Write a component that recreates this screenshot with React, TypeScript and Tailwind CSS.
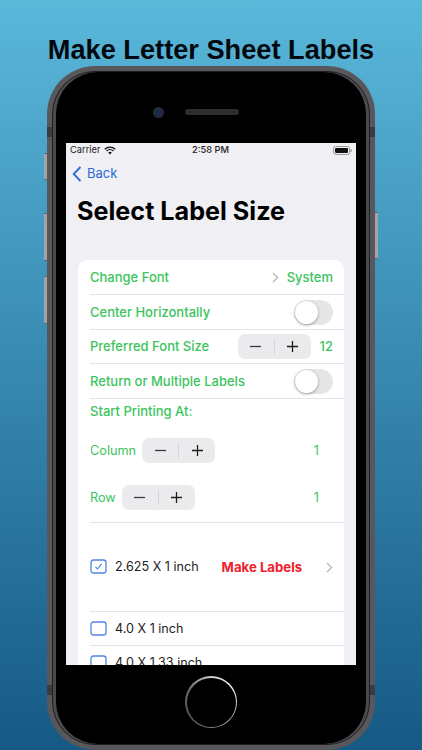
import React from 'react';

function Stepper() {
  return (
    <div className="flex h-[25px] w-[73px] items-center rounded-[7px] bg-[#ebebed]">
      <div className="flex flex-1 justify-center">
        <svg width="13" height="13" viewBox="0 0 13 13"><path d="M1 6.5h11" stroke="#3a3a3c" strokeWidth="1.3" /></svg>
      </div>
      <div className="h-[14px] w-px bg-[#d4d4d6]" />
      <div className="flex flex-1 justify-center">
        <svg width="13" height="13" viewBox="0 0 13 13"><path d="M1 6.5h11M6.5 1v11" stroke="#1c1c1e" strokeWidth="1.3" /></svg>
      </div>
    </div>
  );
}

function Toggle() {
  return (
    <div className="flex h-[25px] w-[39px] items-center rounded-full bg-[#e6e6e8] p-[1px]">
      <div className="h-[23px] w-[23px] rounded-full bg-white shadow-[0_1px_3px_rgba(0,0,0,0.35)]" />
    </div>
  );
}

function Checkbox({ checked }: { checked?: boolean }) {
  return (
    <svg width="17" height="15" viewBox="0 0 17 15" fill="none" className="shrink-0">
      <rect x="1" y="1" width="15" height="13" rx="2.5" stroke="#4f86e0" strokeWidth="1.3" />
      {checked && <path d="M5.5 7.8l2 2.2 4-5.2" stroke="#3f7fe0" strokeWidth="1.1" />}
    </svg>
  );
}

function Chevron() {
  return (
    <svg width="7" height="11" viewBox="0 0 7 11" fill="none">
      <path d="M1 1l4.5 4.5L1 10" stroke="#b4b4b8" strokeWidth="1.3" />
    </svg>
  );
}

function Row({ h, children }: { h: string; children: React.ReactNode }) {
  return (
    <div className={`ml-[12px] flex items-center justify-between border-b border-[#e3e3e5] pr-[11px] ${h}`}>
      {children}
    </div>
  );
}

function SideButton({ className }: { className: string }) {
  return <div className={`absolute w-[3px] rounded-[1px] border-y border-[#5d5d62] bg-[#a3a3a8] ${className}`} />;
}

function Band({ className }: { className: string }) {
  return <div className={`absolute h-[10px] w-[5px] bg-[#3c3c40] ${className}`} />;
}

export default function App() {
  return (
    <div className="h-[750px] w-[422px] overflow-hidden bg-gradient-to-b from-[#5ab8da] to-[#155a85] font-['Inter',sans-serif]">
      <h1 className="pt-[34px] text-center font-['Liberation_Sans',sans-serif] text-[27.2px] font-bold leading-[32px] text-[#03080e]">
        Make Letter Sheet Labels
      </h1>

      <div className="relative mx-auto h-[684px] w-[328px] rounded-[48px] bg-[#58585c] p-[5px]">
        <SideButton className="left-[-3px] top-[87px] h-[27px]" />
        <SideButton className="left-[-3px] top-[147px] h-[48px]" />
        <SideButton className="left-[-3px] top-[210px] h-[48px]" />
        <SideButton className="right-[-3px] top-[146px] h-[47px]" />
        <Band className="left-0 top-[61px]" />
        <Band className="right-0 top-[61px]" />
        <Band className="left-0 top-[619px]" />
        <Band className="right-0 top-[619px]" />

        <div className="h-full rounded-[43px] border border-[#1e1e20] bg-[#4a4a4e] px-[3px]">
          <div className="relative h-full rounded-[42px] bg-black px-[10px] pt-[71px]">
            {/* camera and speaker */}
            <div className="absolute left-[97px] top-[35px] h-[11px] w-[11px] rounded-full border-2 border-[#2a2a35] bg-[#1c2a50]" />
            <div className="absolute left-[129px] top-[37px] h-[6px] w-[54px] rounded-full bg-[#2e2e30]" />

            <div className="h-[522px] overflow-hidden bg-[#efeff4]">
              <div className="relative flex h-[13px] items-center justify-between px-[4px] pt-[1px] text-[9.3px] text-[#222]">
                <div className="flex items-center gap-[4px]">
                  <span>Carrier</span>
                  <svg width="12" height="9" viewBox="0 0 12 9" fill="none">
                    <path d="M0.8 3.2a7.6 7.6 0 0 1 10.4 0M2.6 5a5 5 0 0 1 6.8 0" stroke="#111" strokeWidth="1.3" />
                    <path d="M4.2 6.5a2.6 2.6 0 0 1 3.6 0L6 8.6z" fill="#111" />
                  </svg>
                </div>
                <span className="absolute left-[126px] font-medium">2:58 PM</span>
                <svg width="19" height="9" viewBox="0 0 19 9" fill="none">
                  <rect x="0.5" y="0.5" width="16" height="8" rx="2" stroke="#999" />
                  <rect x="2" y="2" width="13" height="5" rx="1" fill="#111" />
                  <rect x="17.5" y="3" width="1.2" height="3" fill="#999" />
                </svg>
              </div>

              <div className="ml-[6px] mt-[7px] flex h-[22px] items-center gap-[5px] text-[13px] text-[#2a6bd6]">
                <svg width="10" height="16" viewBox="0 0 10 16" fill="none">
                  <path d="M8.5 1L1.7 8l6.8 7" stroke="#2a6bd6" strokeWidth="1.8" />
                </svg>
                <span>Back</span>
              </div>

              <h2 className="ml-[11px] mt-[10px] text-[25.2px] font-bold leading-[32px] text-black">Select Label Size</h2>

              <div className="mx-[12px] mt-[33px] h-[500px] rounded-t-[9px] bg-white text-[13px] font-medium text-[#3cc45c]">
                <Row h="h-[35px]">
                  <span className="pt-px">Change Font</span>
                  <div className="flex items-center gap-[8px]">
                    <Chevron />
                    <span className="pt-px">System</span>
                  </div>
                </Row>
                <Row h="h-[35px]">
                  <span className="pt-px">Center Horizontally</span>
                  <Toggle />
                </Row>
                <Row h="h-[34px]">
                  <span className="pt-px">Preferred Font Size</span>
                  <div className="flex items-center gap-[9px]">
                    <Stepper />
                    <span className="pt-px">12</span>
                  </div>
                </Row>
                <Row h="h-[35px]">
                  <span className="pt-px">Return or Multiple Labels</span>
                  <Toggle />
                </Row>

                <div className="ml-[12px] h-[124px] border-b border-[#e3e3e5] pr-[25px]">
                  <div className="flex h-[25px] items-center">Start Printing At:</div>
                  <div className="mt-[14px] flex h-[25px] items-center justify-between text-[12.7px] font-normal">
                    <div className="flex items-center gap-[6px]">
                      <span>Column</span>
                      <Stepper />
                    </div>
                    <span>1</span>
                  </div>
                  <div className="mt-[22px] flex h-[25px] items-center justify-between text-[12.7px] font-normal">
                    <div className="flex items-center gap-[6px]">
                      <span>Row</span>
                      <Stepper />
                    </div>
                    <span>1</span>
                  </div>
                </div>

                <Row h="h-[89px]">
                  <div className="flex items-center gap-[8px] text-[12.6px] font-normal text-[#1c1c1e]">
                    <Checkbox checked />
                    <span className="pt-px">2.625 X 1 inch</span>
                  </div>
                  <span className="ml-[23px] flex-1 pt-px text-[13.2px] font-bold text-[#f0202c]">Make Labels</span>
                  <Chevron />
                </Row>
                <Row h="h-[34px]">
                  <div className="flex items-center gap-[8px] text-[12.6px] font-normal text-[#1c1c1e]">
                    <Checkbox />
                    <span className="pt-px">4.0 X 1 inch</span>
                  </div>
                </Row>
                <Row h="h-[34px]">
                  <div className="flex items-center gap-[8px] text-[12.6px] font-normal text-[#1c1c1e]">
                    <Checkbox />
                    <span className="pt-px">4.0 X 1.33 inch</span>
                  </div>
                </Row>
              </div>
            </div>

            {/* home button */}
            <div className="absolute left-[129px] top-[604px] h-[52px] w-[52px] rounded-full bg-[conic-gradient(#cfcfcf_0deg,#f2f2f2_60deg,#aaaaaa_140deg,#555555_220deg,#666666_300deg,#cfcfcf_360deg)] p-[1.5px]">
              <div className="h-full w-full rounded-full bg-black" />
            </div>
          </div>
        </div>
      </div>
    </div>
  );
}
